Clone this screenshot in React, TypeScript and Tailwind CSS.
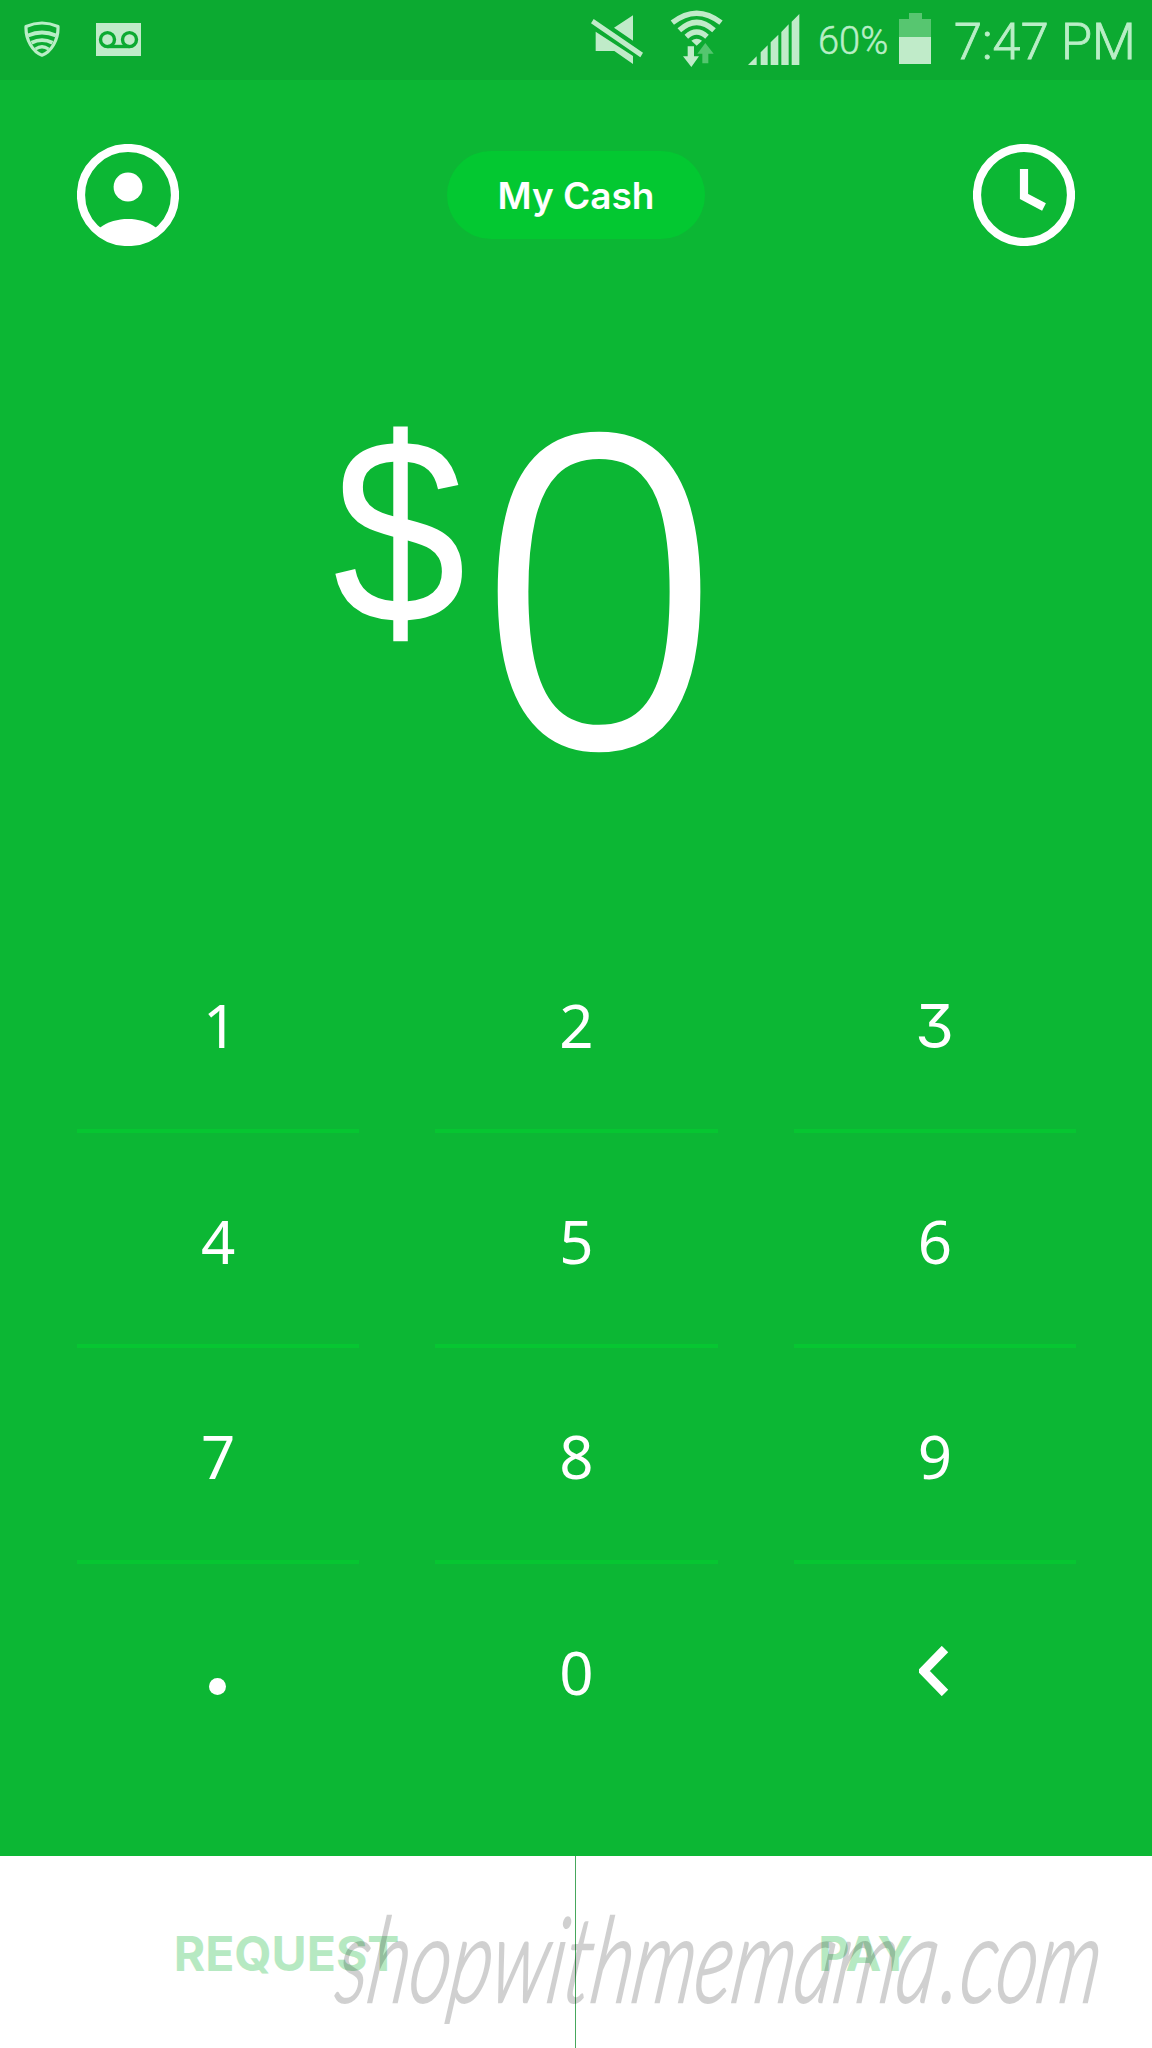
import React from 'react';

const keypad = [
    ['1', '2', '3'],
    ['4', '5', '6'],
    ['7', '8', '9'],
    ['.', '0', 'back'],
];

const ShieldIcon: React.FC = () => (
    <svg className="w-9 h-9" viewBox="0 0 36 36" fill="none" stroke="#b9eec6">
        <path d="M2 5.5Q18-1.5 34 5.5C34.5 19 27 31 18 34.2C9 31 1.5 19 2 5.5Z" strokeWidth="3.2" strokeLinejoin="round" />
        <path d="M4 14.5Q18 8.5 32 14.5M7.5 21.8Q18 16.5 28.5 21.8" strokeWidth="3.8" />
        <path d="M11.5 28Q18 23.5 24.5 28" strokeWidth="3.2" />
    </svg>
);

const VoicemailIcon: React.FC = () => (
    <svg className="w-[45px] h-[33px]" viewBox="0 0 45 33">
        <rect width="45" height="33" fill="#c0ebc9" />
        <g fill="none" stroke="#0caa31" strokeWidth="3.4">
            <circle cx="11.5" cy="16.6" r="7" />
            <circle cx="33.5" cy="16.6" r="7" />
            <path d="M11.5 23.5H33.5" />
        </g>
    </svg>
);

const MuteIcon: React.FC = () => (
    <svg className="w-[52px] h-[50px]" viewBox="62 45 156 150" fill="#c0ebc9">
        <path d="M131 83L188 46V122ZM76 95L188 168V192L132 153H76ZM70 57L218 158L210 172L62 70Z" />
    </svg>
);

const WifiIcon: React.FC = () => (
    <svg className="w-[53px] h-[57px]" viewBox="301 31 159 171">
        <g fill="none" stroke="#c0ebc9" strokeWidth="16">
            <path d="M308 69Q381 12 454 69" />
            <path d="M329 92Q381 44 433 92" />
            <path d="M350 111Q381 83 412 111" />
        </g>
        <path d="M365 123Q381 111 397 123L381 138Z" fill="#c0ebc9" />
        <path d="M354 140H373V170H388L365 202L340 170H354Z" fill="#c0ebc9" />
        <path d="M407 130L432 162H416V191H398V162H383Z" fill="#54c66f" />
    </svg>
);

const SignalIcon: React.FC = () => (
    <svg className="w-[52px] h-[51px]" viewBox="532 41 156 153" fill="#c0ebc9">
        <path d="M532 194L558 168V194ZM570 156L591 135V194H570ZM600 126L623 103V194H600ZM632 95L654 72V194H632ZM663 64L686 41V194H663Z" />
    </svg>
);

const BatteryIcon: React.FC = () => (
    <svg className="w-8 h-[51px]" viewBox="0 0 32 51">
        <path d="M10 0H23V6H32V24H0V6H10Z" fill="#57c670" />
        <path d="M0 24H32V51H0Z" fill="#c0ebc9" />
    </svg>
);

const ProfileIcon: React.FC = () => (
    <svg className="w-[102px] h-[102px]" viewBox="0 0 102 102">
        <circle cx="51" cy="51" r="47" fill="none" stroke="#fff" strokeWidth="8.2" />
        <circle cx="51" cy="43" r="14.4" fill="#fff" />
        <path d="M22.5 84C31 77.5 41 75 51 75S71 77.5 79.5 84L72 94Q51 104 30 94Z" fill="#fff" />
    </svg>
);

const ActivityIcon: React.FC = () => (
    <svg className="w-[102px] h-[102px]" viewBox="0 0 102 102" fill="none" stroke="#fff" strokeWidth="8.2">
        <circle cx="51" cy="51" r="47" />
        <path d="M51 25V52.5L71 63" />
    </svg>
);

const StatusBar: React.FC = () => (
    <div className="flex h-20 items-start bg-[#0caa31] font-['Roboto'] font-light text-[#b9eec6]">
        <div className="mt-[21px] ml-6"><ShieldIcon /></div>
        <div className="mt-[23px] ml-9"><VoicemailIcon /></div>
        <div className="mt-[15px] ml-[450px]"><MuteIcon /></div>
        <div className="mt-[10px] ml-[27px]"><WifiIcon /></div>
        <div className="mt-[14px] ml-[25px]"><SignalIcon /></div>
        <div className="mt-[21px] ml-[18px] w-[81px] whitespace-nowrap text-[38px] leading-10 [-webkit-text-stroke:0.5px]">60%</div>
        <div className="mt-[13px]"><BatteryIcon /></div>
        <div className="mt-[12px] ml-[23px] whitespace-nowrap text-[50.5px] leading-[60px] [-webkit-text-stroke:0.8px]">7:47 PM</div>
    </div>
);

const Key: React.FC<{ value: string; last: boolean }> = ({ value, last }) => {
    const border = last ? 'border-transparent' : 'border-[#06c631]';
    return (
        <button className={`flex h-full items-center justify-center border-b-4 pt-[5px] font-['Noto_Sans'] text-[60px] leading-none text-white ${border}`}>
            {value === 'back' && (
                <svg className="mr-[2px] mb-[2px] w-[30px] h-[50px]" viewBox="0 0 30 50" fill="none" stroke="#fff" strokeWidth="9">
                    <path d="M26 3L4.5 25L26 47" />
                </svg>
            )}
            {value === '.' && <span className="mt-[30px] mr-px size-[17px] rounded-full bg-white" />}
            {value === '3' && <span className="inline-block scale-x-105 pt-[2px] font-['Inter'] [font-feature-settings:'cv09','ss01']">3</span>}
            {value === '1' && <span className="pl-1">1</span>}
            {!['back', '.', '3', '1'].includes(value) && value}
        </button>
    );
};

const App: React.FC = () => (
    <div className="relative flex h-[2048px] w-[1152px] flex-col overflow-hidden bg-[#0cb734]">
        <StatusBar />

        <header className="flex items-center justify-between px-[77px] pt-16">
            <ProfileIcon />
            <button className="flex h-[88px] w-[258px] items-center justify-center rounded-full bg-[#03c831] pt-[2px] font-['Inter'] text-[37px] font-semibold text-white">
                My Cash
            </button>
            <ActivityIcon />
        </header>

        <div className="flex h-[671px] items-start pt-[180px] pl-[327px] font-['Noto_Sans'] text-white">
            <span className="mt-[-45px] w-[150px] font-['Liberation_Sans'] text-[260px] leading-[300px]">
                <span className="inline-block scale-x-[0.92] scale-y-[1.02]">$</span>
            </span>
            <span className="mt-[-61px] text-[428px] leading-[428px] font-light [-webkit-text-stroke:6px_white]">0</span>
        </div>

        <div className="grid h-[862px] grid-cols-3 grid-rows-4 gap-x-[76px] pr-[76px] pl-[77px]">
            {keypad.map((row, rowIndex) =>
                row.map(value => <Key key={value} value={value} last={rowIndex === 3} />)
            )}
        </div>

        <footer className="mt-auto flex h-48 bg-white font-['Inter'] text-[48px] font-bold text-[#b6e9c2]">
            <button className="flex w-[576px] items-center justify-center border-r border-[#48a75d] pt-1 pr-[2px]">REQUEST</button>
            <button className="flex flex-1 items-center justify-center pt-1 pl-[3px]">PAY</button>
        </footer>

        {/* Site watermark over the action buttons */}
        <div className="absolute left-[340px] top-[1894px] flex origin-left scale-x-[0.767] scale-y-[1.14] -skew-x-12 whitespace-nowrap font-['Lato'] text-[104px] leading-[124px] font-light text-black italic opacity-18 [-webkit-text-stroke:2px_black]">
            <span>shopwithmemama</span>
            <span className="ml-2">.com</span>
        </div>
    </div>
);

export default App;
